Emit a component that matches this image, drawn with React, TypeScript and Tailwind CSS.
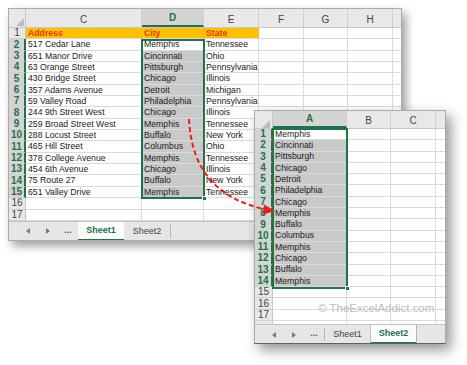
import React from "react";

const GREEN = "#217346";
const FONT = '"Liberation Sans", Arial, sans-serif';

type Col = { w: string; label: string };

type CellKind = "white" | "orange" | "sel";

type SheetProps = {
  cols: Col[];
  rowHeadW: string;
  headerH: string;
  rowH: string;
  rowCount: number;
  partialRow?: number;
  partialH?: string;
  selCol: number;
  isRowSel: (r: number) => boolean;
  cell: (r: number, c: number) => { text?: string; kind: CellKind };
};

function Corner() {
  return (
    <svg width="100%" height="100%" className="block">
      <polygon points="7,17 15,17 15,9" fill="#bdbdbd" />
    </svg>
  );
}

function Sheet(p: SheetProps) {
  const rows: number[] = [];
  for (let i = 1; i <= p.rowCount; i++) rows.push(i);
  return (
    <div className="flex flex-col">
      <div className={`flex ${p.headerH} bg-[#e8e8e8] border-b border-[#c8c8c8]`}>
        <div className={`${p.rowHeadW} shrink-0 border-r border-[#c8c8c8]`}>
          <Corner />
        </div>
        {p.cols.map((c, i) => {
          const sel = i === p.selCol;
          return (
            <div
              key={i}
              className={`${c.w} shrink-0 flex items-end justify-center pb-[2px] border-r border-[#cfcfcf] text-[10px] leading-none ${
                sel
                  ? "bg-[#d4d4d4] text-[#217346] font-bold border-b-2 border-b-[#217346]"
                  : "text-[#444]"
              }`}
            >
              {c.label}
            </div>
          );
        })}
      </div>
      {rows.map((r) => {
        const rs = p.isRowSel(r);
        return (
          <div key={r} className={`flex ${p.rowH}`}>
            <div
              className={`${p.rowHeadW} shrink-0 flex items-center justify-center text-[10px] leading-none border-b border-[#d0d0d0] ${
                rs
                  ? "bg-[#d4d4d4] text-[#217346] font-bold border-r-2 border-r-[#217346]"
                  : "bg-[#e8e8e8] text-[#444] border-r border-r-[#c8c8c8]"
              }`}
            >
              {r}
            </div>
            {p.cols.map((c, ci) => {
              const cl = p.cell(r, ci);
              const bg =
                cl.kind === "orange"
                  ? "bg-[#ffc000] border-r-[#ffc000] text-[#e8380d] font-bold"
                  : cl.kind === "sel"
                  ? "bg-[#c9c9c9] border-r-[#dadada] text-[#1a1a1a]"
                  : "bg-white border-r-[#dadada] text-[#1a1a1a]";
              return (
                <div
                  key={ci}
                  className={`${c.w} shrink-0 flex items-center pl-[2px] overflow-hidden whitespace-nowrap text-[8.7px] leading-none border-r border-b border-b-[#dadada] ${bg}`}
                >
                  {cl.text}
                </div>
              );
            })}
          </div>
        );
      })}
      {p.partialRow ? (
        <div className={`flex ${p.partialH} overflow-hidden`}>
          <div
            className={`${p.rowHeadW} shrink-0 flex items-start justify-center text-[10px] leading-none bg-[#e8e8e8] text-[#444] border-r border-[#c8c8c8]`}
          />
          {p.cols.map((c, ci) => (
            <div key={ci} className={`${c.w} shrink-0 border-r border-[#dadada] bg-white`} />
          ))}
        </div>
      ) : null}
    </div>
  );
}

function Tri({ dir }: { dir: "l" | "r" }) {
  return (
    <svg width="4" height="6" viewBox="0 0 4 6" className="block">
      {dir === "l" ? (
        <polygon points="4,0 4,6 0,3" fill="#7a7a7a" />
      ) : (
        <polygon points="0,0 0,6 4,3" fill="#7a7a7a" />
      )}
    </svg>
  );
}

function TabBar({ active }: { active: 1 | 2 }) {
  const activeCls =
    "bg-[#fbfbfb] text-[#217346] font-bold border-b-2 border-b-[#217346]";
  const inactiveCls = "text-[#444]";
  return (
    <div className="flex h-[20px] items-stretch border-t border-[#c3c3c3] bg-[#e6e6e6] text-[9px]">
      <div className="w-[9px] shrink-0" />
      <div className="w-[20px] shrink-0 flex items-center justify-center">
        <Tri dir="l" />
      </div>
      <div className="w-[20px] shrink-0 flex items-center justify-center">
        <Tri dir="r" />
      </div>
      <div className="w-[20px] shrink-0 flex items-center justify-center text-[#555] font-bold text-[9px] pb-[2px]">
        ...
      </div>
      <div
        className={`w-[46px] shrink-0 flex items-center justify-center ${
          active === 1 ? activeCls : inactiveCls + " border-l border-l-[#b5b5b5] my-[3px]"
        }`}
      >
        Sheet1
      </div>
      <div
        className={`w-[46px] shrink-0 flex items-center justify-center ${
          active === 2 ? activeCls + " border-l border-l-[#c3c3c3]" : inactiveCls
        }`}
      >
        Sheet2
      </div>
      {active === 1 ? (
        <div className="w-px my-[3px] bg-[#b5b5b5]" />
      ) : (
        <div className="flex-1 border-l border-[#b5b5b5]" />
      )}
    </div>
  );
}

const ADDR = [
  "517 Cedar Lane",
  "651 Manor Drive",
  "63 Orange Street",
  "430 Bridge Street",
  "357 Adams Avenue",
  "59 Valley Road",
  "244 9th Street West",
  "259 Broad Street West",
  "288 Locust Street",
  "465 Hill Street",
  "378 College Avenue",
  "454 6th Avenue",
  "75 Route 27",
  "651 Valley Drive",
];
const CITY = [
  "Memphis",
  "Cincinnati",
  "Pittsburgh",
  "Chicago",
  "Detroit",
  "Philadelphia",
  "Chicago",
  "Memphis",
  "Buffalo",
  "Columbus",
  "Memphis",
  "Chicago",
  "Buffalo",
  "Memphis",
];
const STATE = [
  "Tennessee",
  "Ohio",
  "Pennsylvania",
  "Illinois",
  "Michigan",
  "Pennsylvania",
  "Illinois",
  "Tennessee",
  "New York",
  "Ohio",
  "Tennessee",
  "Illinois",
  "New York",
  "Tennessee",
];

const W1_COLS: Col[] = [
  { w: "w-[116px]", label: "C" },
  { w: "w-[62px]", label: "D" },
  { w: "w-[55px]", label: "E" },
  { w: "w-[45px]", label: "F" },
  { w: "w-[44px]", label: "G" },
  { w: "w-[45px]", label: "H" },
  { w: "w-[10px]", label: "" },
];

const W2_COLS: Col[] = [
  { w: "w-[74px]", label: "A" },
  { w: "w-[44px]", label: "B" },
  { w: "w-[45px]", label: "C" },
  { w: "w-[11px]", label: "" },
];

export default function App() {
  return (
    <div
      className="relative w-[467px] h-[365px] bg-white overflow-hidden"
      style={{ fontFamily: FONT }}
    >
      <div className="absolute left-[8px] top-[8px] w-[394px] h-[233px] bg-white border border-[#ababab] shadow-[4px_5px_9px_rgba(0,0,0,0.38)] overflow-hidden">
        <div className="relative">
          <Sheet
            cols={W1_COLS}
            rowHeadW="w-[17px]"
            headerH="h-[19px]"
            rowH="h-[11.35px]"
            rowCount={17}
            selCol={1}
            isRowSel={(r) => r >= 2 && r <= 15}
            cell={(r, c) => {
              if (r === 1) {
                if (c === 0) return { text: "Address", kind: "orange" };
                if (c === 1) return { text: "City", kind: "orange" };
                if (c === 2) return { text: "State", kind: "orange" };
                return { kind: "white" };
              }
              if (r >= 2 && r <= 15) {
                const i = r - 2;
                if (c === 0) return { text: ADDR[i], kind: "white" };
                if (c === 1) return { text: CITY[i], kind: r === 2 ? "white" : "sel" };
                if (c === 2) return { text: STATE[i], kind: "white" };
              }
              return { kind: "white" };
            }}
          />
          <div className="absolute left-[132px] top-[29.5px] w-[64px] h-[160px] border-2 border-[#217346]">
            <div className="absolute right-[-4px] bottom-[-4px] w-[5px] h-[5px] bg-[#217346] border border-white" />
          </div>
        </div>
        <TabBar active={1} />
      </div>

      <div className="absolute left-[254px] top-[110px] w-[192px] h-[234px] bg-white border border-[#ababab] border-b-[#5f5f5f] shadow-[5px_6px_12px_rgba(0,0,0,0.42)] overflow-hidden">
        <div className="relative">
          <Sheet
            cols={W2_COLS}
            rowHeadW="w-[18px]"
            headerH="h-[18px]"
            rowH="h-[11.3px]"
            rowCount={17}
            partialRow={18}
            partialH="h-[3px]"
            selCol={0}
            isRowSel={(r) => r >= 1 && r <= 14}
            cell={(r, c) => {
              if (c === 0 && r >= 1 && r <= 14)
                return { text: CITY[r - 1], kind: r === 1 ? "white" : "sel" };
              return { kind: "white" };
            }}
          />
          <div className="absolute left-[17px] top-[17px] w-[76px] h-[160.5px] border-2 border-[#217346]">
            <div className="absolute right-[-4px] bottom-[-4px] w-[5px] h-[5px] bg-[#217346] border border-white" />
          </div>
          <div className="absolute left-[63px] top-[192px] text-[11.5px] leading-none text-[#bdbdbd] whitespace-nowrap">
            © TheExcelAddict.com
          </div>
        </div>
        <TabBar active={2} />
      </div>

      <svg
        className="absolute left-0 top-0 pointer-events-none"
        width="467"
        height="365"
        viewBox="0 0 467 365"
      >
        <path
          d="M189 119 C191 160, 208 197, 266 209.5"
          fill="none"
          stroke="#ee1c1c"
          strokeWidth="2"
          strokeDasharray="5 3"
        />
        <polygon points="275,211 264,204.5 263,214.5" fill="#ee1c1c" />
      </svg>
    </div>
  );
}
